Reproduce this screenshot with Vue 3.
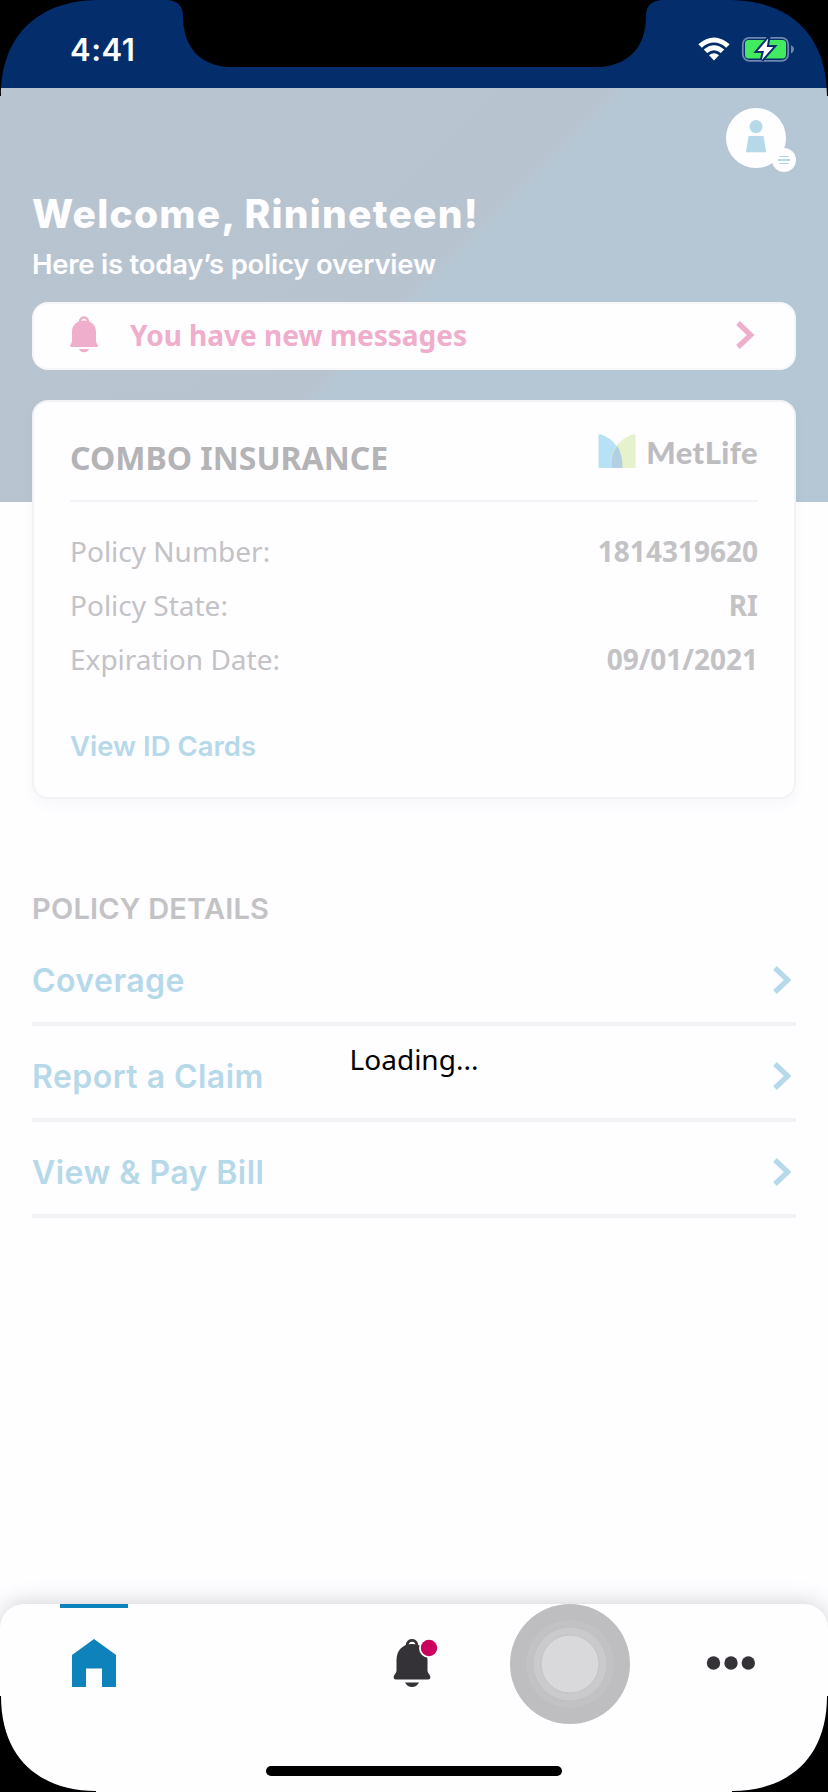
<script setup>
const policy = [
  { label: 'Policy Number:', value: '1814319620' },
  { label: 'Policy State:', value: 'RI' },
  { label: 'Expiration Date:', value: '09/01/2021' },
]
const links = ['Coverage', 'Report a Claim', 'View & Pay Bill']
</script>

<template>
  <div class="phone">
    <div class="status">
      <span class="time">4:41</span>
      <svg class="wifi" width="32" height="24" viewBox="0 0 32 24">
        <path d="M0.3 7.2 Q16 -6.4 31.7 7.2 L28.2 10.7 Q16 0.5 3.8 10.7 Z" fill="#fff" />
        <path d="M5.7 12.5 Q16 4 26.3 12.5 L22.8 16 Q16 10.6 9.2 16 Z" fill="#fff" />
        <path d="M11 18.2 Q16 14.4 21 18.2 L16 23.6 Z" fill="#fff" />
      </svg>
      <svg class="battery" width="54" height="28" viewBox="0 0 54 28">
        <rect x="1.8" y="2.8" width="45.4" height="23" rx="6.5" fill="none" stroke="#6f86ae" stroke-width="1.8" />
        <rect x="4" y="5" width="41" height="18.4" rx="3.6" fill="#41ea5f" />
        <path d="M50 10.2 Q53 11.5 53 14.3 Q53 17 50 18.4 Z" fill="#6f86ae" />
        <path d="M27.2 3.5 L16.6 16 H23 L20.8 25 L32.2 12 H25.8 Z" fill="#fff" stroke="#042d6c" stroke-width="4" paint-order="stroke" />
      </svg>
    </div>

    <main class="page">
      <header class="top">
        <svg class="avatar" width="70" height="64" viewBox="0 0 70 64">
          <circle cx="30" cy="30" r="30" fill="#fefdff" />
          <circle cx="30" cy="18.6" r="6.5" fill="#b6d9ea" />
          <path d="M22.5 28 H37.5 L40.2 44.3 H20 Z" fill="#b6d9ea" />
          <circle cx="58" cy="52" r="12" fill="#fefdff" />
          <path d="M53 48.5 H63 M53 55.5 H63" stroke="#b6d9ea" stroke-width="1.2" />
          <path d="M52 52 H64" stroke="#b6d9ea" stroke-width="2" />
        </svg>
        <h1>Welcome, Rinineteen!</h1>
        <p class="sub">Here is today’s policy overview</p>
      </header>

      <section class="alert">
        <svg class="bell" width="28" height="37" viewBox="0 0 28 37">
          <path d="M10 6 C10 0 18 0 18 6" fill="none" stroke="#efaecb" stroke-width="2.4" />
          <path d="M2 16 C2 8.5 7.5 4.5 14 4.5 S26 8.5 26 16 V25 Q26.2 27.2 27.5 28.5 C28.5 30 27.8 31 26.5 31 H1.5 C0.2 31 -0.5 30 0.5 28.5 Q1.8 27.2 2 25 Z" fill="#efaecb" />
          <path d="M9 33 H19 Q17.5 36.2 14 36.2 T9 33 Z" fill="#efaecb" />
        </svg>
        <span>You have new messages</span>
        <svg class="chev pink" width="19" height="28" viewBox="0 0 19 28"><path d="M2 2 L14.7 14 L2 26" /></svg>
      </section>

      <section class="card">
        <div class="card-head">
          <h2>COMBO INSURANCE</h2>
          <div class="logo">
            <svg width="38" height="34" viewBox="0 0 38 34">
              <path d="M0.5 1.5 Q0.5 0 2 0.3 C15 4 24.5 16 24.5 34 H2 Q0.5 34 0.5 32.5 Z" fill="#b7e1f4" />
              <path d="M37.5 1.5 Q37.5 0 36 0.3 C22 4 13 16 13 28 L14 34 H36 Q37.5 34 37.5 32.5 Z" fill="#e5f2cb" />
              <path d="M19.3 11.5 C14.5 18 12 26 14 34 H24.5 C24.5 25 22.8 17.5 19.3 11.5 Z" fill="#b3cfe2" />
            </svg>
            <span>MetLife</span>
          </div>
        </div>
        <div v-for="row in policy" :key="row.label" class="row">
          <span>{{ row.label }}</span><b>{{ row.value }}</b>
        </div>
        <a class="ids">View ID Cards</a>
      </section>

      <section class="details">
        <h3>POLICY DETAILS</h3>
        <a v-for="text in links" :key="text" class="link">
          <span>{{ text }}</span>
          <svg class="chev blue" width="19" height="28" viewBox="0 0 19 28"><path d="M2 2 L14.7 14 L2 26" /></svg>
        </a>
      </section>
    </main>

    <nav class="tabs">
      <div class="tab active">
        <svg width="44" height="48" viewBox="0 0 44 48"><path d="M0 16 L22 0 L44 16 V48 H30 V29.5 H14 V48 H0 Z" fill="#0d82bb" /></svg>
      </div>
      <div class="tab"></div>
      <div class="tab">
        <svg class="navbell" width="46" height="48" viewBox="0 0 46 48">
          <path d="M14 7 C14 -0.5 24 -0.5 24 7" fill="none" stroke="#343236" stroke-width="2.8" />
          <path d="M3.5 21 C3.5 11 10 5 19 5 S34.5 11 34.5 21 V32 Q35 34.5 37 36.5 C38 39 37 40.5 35 40.5 H3 C1 40.5 0 39 1 36.5 Q3 34.5 3.5 32 Z" fill="#343236" />
          <path d="M12 43.5 H26 Q23.5 48 19 48 T12 43.5 Z" fill="#343236" />
          <circle cx="36" cy="9" r="10" fill="#fefdff" />
          <circle cx="36" cy="9" r="8.2" fill="#c9005f" />
        </svg>
      </div>
      <div class="tab">
        <svg class="touch" width="120" height="120" viewBox="0 0 120 120">
          <circle cx="60" cy="60" r="60" fill="#bebdc0" />
          <circle cx="60" cy="60" r="44" fill="#c2c1c4" />
          <circle cx="60" cy="60" r="37" fill="#cac9cc" stroke="#bfbec1" stroke-width="0.8" />
          <circle cx="60" cy="60" r="29" fill="#d9d8da" stroke="#c3c2c5" stroke-width="1" />
        </svg>
      </div>
      <div class="tab">
        <svg class="dots" width="50" height="14" viewBox="0 0 50 14" fill="#343236"><circle cx="7.5" cy="7" r="6.7" /><circle cx="25" cy="7" r="6.7" /><circle cx="42.3" cy="7" r="6.7" /></svg>
      </div>
    </nav>

    <div class="loading">Loading...</div>
    <div class="home-bar"></div>
    <svg class="bezel" width="828" height="1792" viewBox="0 0 828 1792">
      <path d="M0 0 H96 C43 1 1 31 1 96 H0 Z" />
      <path d="M828 0 H732 C785 1 827 31 827 96 H828 Z" />
      <path d="M0 1792 H96 V1791 C43 1791 1 1761 1 1696 H0 Z" />
      <path d="M828 1792 H732 V1791 C785 1791 827 1761 827 1696 H828 Z" />
      <path d="M167 0 C178 1 183 6 183 16 C183 47 200 65 228 67 H602 C629 64 646 47 646 16 C646 6 651 1 662 0 Z" />
    </svg>
  </div>
</template>

<style>
body { margin: 0; background: #fefdff; }
</style>

<style scoped>
.phone {
  position: relative;
  width: 828px;
  height: 1792px;
  overflow: hidden;
  display: flex;
  flex-direction: column;
  background: #fefdff;
  font-family: "Noto Sans", sans-serif;
  color: #c3c2c5;
}
.phone svg { display: block; flex: none; }
h1, h2, h3, p { margin: 0; }
.status {
  height: 88px;
  flex: none;
  box-sizing: border-box;
  padding: 0 33px 0 70px;
  display: flex;
  background: #042d6c;
}
.time {
  margin-top: 30px;
  flex: 1;
  font: 600 31px/40px Inter, sans-serif;
  letter-spacing: 0.5px;
  color: #fff;
}
.wifi { margin-top: 37px; }
.battery { margin: 35px 0 0 11px; }
.page {
  flex: 1;
  padding: 0 32px;
  background: linear-gradient(135deg, #b8c5d1 0%, #b7c4d0 49.5%, #b5c7d4 51%, #b5c7d4 100%) 0 0 / 828px 414px no-repeat;
}
.top { color: #fefdff; font-family: Inter, sans-serif; padding-top: 20px; }
.avatar { margin: 0 0 0 694px; }
h1 { margin-top: 18px; font-size: 39px; line-height: 48px; font-weight: 800; letter-spacing: 1.23px; white-space: nowrap; }
.sub { margin-top: 8px; font-size: 27.5px; line-height: 36px; font-weight: 600; letter-spacing: -0.24px; }
.alert {
  margin-top: 20px;
  height: 68px;
  box-sizing: border-box;
  border: 2px solid #f6f6f9;
  border-radius: 16px;
  background: #fefdff;
  display: flex;
  align-items: center;
  padding: 0 39px 2px 36px;
  color: #efaecb;
  font-size: 28px;
  font-weight: 700;
}
.bell { margin-top: -2px; }
.alert span { flex: 1; margin-left: 32px; }
.chev path { fill: none; stroke-width: 5.2; }
.pink path { stroke: #efaecb; }
.blue path { stroke: #b6d9ea; }
.card {
  margin-top: 30px;
  height: 399px;
  box-sizing: border-box;
  border: 2px solid #f3f3f6;
  border-radius: 16px;
  background: #fefdff;
  box-shadow: 0 6px 12px rgba(60, 50, 80, 0.035);
  padding: 0 36px;
}
.card-head {
  height: 100px;
  box-sizing: border-box;
  display: flex;
  justify-content: space-between;
  border-bottom: 2px solid #f3f3f6;
  margin-bottom: 22px;
}
h2 { margin-top: 34px; font-size: 32px; line-height: 44px; font-weight: 700; color: #b4b3b6; }
.logo { display: flex; padding-top: 32px; color: #bdbcbf; }
.logo span { margin: -2px 0 0 10px; font: 900 31px/40px Lato, sans-serif; letter-spacing: 0.4px; }
.row { height: 54px; line-height: 54px; display: flex; justify-content: space-between; font-size: 28px; }
.ids { display: block; margin-top: 42px; font: 600 27.5px/36px Inter, sans-serif; color: #b6d9ea; }
.details { padding-top: 92px; font-family: Inter, sans-serif; }
h3 { font-size: 29px; line-height: 36px; font-weight: 600; margin-bottom: 3px; letter-spacing: 0.2px; }
.link {
  height: 96px;
  box-sizing: border-box;
  border-bottom: 4px solid #f3f3f6;
  padding: 7px 4px 0 0;
  display: flex;
  align-items: center;
  justify-content: space-between;
  font-size: 32px;
  font-weight: 600;
  letter-spacing: 0.45px;
  color: #b6d9ea;
}
.link span { padding-top: 2px; }
.tabs {
  height: 188px;
  flex: none;
  box-sizing: border-box;
  padding: 0 18px 0 14px;
  display: grid;
  grid-template-columns: repeat(5, 1fr);
  border-radius: 24px 24px 0 0;
  background: #fefdff;
  box-shadow: 0 -2px 22px rgba(0, 0, 0, 0.17);
}
.tab { display: flex; justify-content: center; align-items: flex-start; padding-top: 35px; }
.active { padding-top: 0; flex-direction: column; align-items: center; justify-content: flex-start; }
.active::before { content: ""; width: 68px; height: 4px; background: #0d82bb; margin-bottom: 31px; }
.navbell { margin-left: 8px; }
.touch { margin: -35px 0 0 -2px; }
.dots { margin: 17px 0 0 2px; }
.loading {
  position: absolute;
  top: 1039px;
  left: 0;
  width: 100%;
  text-align: center;
  font-size: 28px;
  line-height: 40px;
  color: #000;
}
.home-bar { position: absolute; left: 266px; top: 1766px; width: 296px; height: 10px; border-radius: 5px; background: #000; }
.bezel { position: absolute; left: 0; top: 0; }
</style>
